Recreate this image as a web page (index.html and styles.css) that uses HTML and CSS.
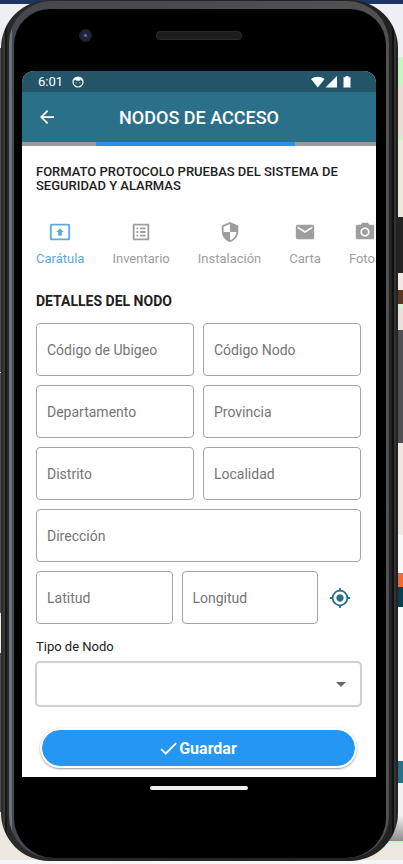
FILE: index.html
```html
<!DOCTYPE html>
<html lang="es">
<head>
<meta charset="utf-8">
<meta name="viewport" content="width=device-width, initial-scale=1">
<title>Nodos de acceso</title>
<link rel="stylesheet" href="styles.css">
</head>
<body>
<div class="phone">
  <div class="rim">
    <div class="body">
      <div class="sensors"><span class="camera"></span><span class="speaker"></span></div>
      <div class="screen">
        <div class="status">
          <span>6:01</span>
          <svg class="face" viewBox="0 0 12 12" width="12" height="12"><circle cx="6" cy="6" r="5" fill="none" stroke="#fff" stroke-width="1.200"/><path d="M1.500 5C2 2.500 4 1.300 6 1.300S10 2.500 10.500 5L8.500 4 7.600 4.700H4.500L3.500 3.800Z" fill="#fff"/><circle cx="4.200" cy="6.700" r=".5" fill="#fff"/><circle cx="7.800" cy="6.700" r=".5" fill="#fff"/></svg>
          <svg class="signals" viewBox="0 0 41 12" width="41" height="12" fill="#fff"><path d="M0 3C4 0 9.500 0 13.500 3L6.800 11.500Z"/><path d="M26 0V11.500H14.500Z"/><path d="M34.500 0h3v1.200H39.500V11.500h-7V1.200h2Z"/></svg>
        </div>
        <header class="appbar">
          <button class="back" type="button" aria-label="Volver"><svg viewBox="4 4 16 16" width="14" height="14"><path fill="#fff" d="M20 11H7.830l5.590-5.590L12 4l-8 8 8 8 1.410-1.410L7.830 13H20z"/></svg></button>
          <h1>NODOS DE ACCESO</h1>
        </header>
        <div class="track"><div class="bar"></div></div>
        <main>
          <h2 class="format">FORMATO PROTOCOLO PRUEBAS DEL SISTEMA DE SEGURIDAD Y ALARMAS</h2>
          <nav class="tabs">
            <a class="tab active" href="#caratula"><svg viewBox="0 0 24 24" width="22" height="22"><path d="M21 3H3c-1.110 0-2 .890-2 2v14c0 1.110.890 2 2 2h18c1.110 0 2-.890 2-2V5c0-1.110-.890-2-2-2zm0 16.020H3V4.980h18v14.040zM10 12H8l4-4 4 4h-2v4h-4v-4z"/></svg>Carátula</a>
            <a class="tab" href="#inventario"><svg viewBox="0 0 24 24" width="22" height="22"><path d="M19 5v14H5V5h14m1.100-2H3.900c-.500 0-.900.400-.900.900v16.200c0 .400.400.900.900.900h16.200c.400 0 .900-.500.900-.900V3.900c0-.500-.500-.900-.900-.900zM11 7h6v2h-6V7zm0 4h6v2h-6v-2zm0 4h6v2h-6zM7 7h2v2H7zm0 4h2v2H7zm0 4h2v2H7z"/></svg>Inventario</a>
            <a class="tab" href="#instalacion"><svg viewBox="0 0 24 24" width="22" height="22"><path d="M12 1L3 5v6c0 5.550 3.840 10.740 9 12 5.160-1.260 9-6.450 9-12V5l-9-4zm0 10.990h7c-.530 4.120-3.280 7.790-7 8.940V12H5V6.300l7-3.110v8.800z"/></svg>Instalación</a>
            <a class="tab" href="#carta"><svg viewBox="0 0 24 24" width="22" height="22"><path d="M20 4H4c-1.100 0-1.990.900-1.990 2L2 18c0 1.100.900 2 2 2h16c1.100 0 2-.900 2-2V6c0-1.100-.900-2-2-2zm0 4l-8 5-8-5V6l8 5 8-5v2z"/></svg>Carta</a>
            <a class="tab" href="#fotos"><svg viewBox="0 0 24 24" width="22" height="22"><circle cx="12" cy="12" r="3.200"/><path d="M9 2L7.170 4H4c-1.100 0-2 .900-2 2v12c0 1.100.900 2 2 2h16c1.100 0 2-.900 2-2V6c0-1.100-.900-2-2-2h-3.170L15 2H9zm3 15c-2.760 0-5-2.240-5-5s2.240-5 5-5 5 2.240 5 5-2.240 5-5 5z"/></svg>Fotos</a>
          </nav>
          <form>
            <h2 class="section">DETALLES DEL NODO</h2>
            <div class="fields">
              <input type="text" aria-label="Código de Ubigeo" placeholder="Código de Ubigeo">
              <input type="text" aria-label="Código Nodo" placeholder="Código Nodo">
              <input type="text" aria-label="Departamento" placeholder="Departamento">
              <input type="text" aria-label="Provincia" placeholder="Provincia">
              <input type="text" aria-label="Distrito" placeholder="Distrito">
              <input type="text" aria-label="Localidad" placeholder="Localidad">
              <input class="wide" type="text" aria-label="Dirección" placeholder="Dirección">
              <div class="coords wide">
                <input type="text" aria-label="Latitud" placeholder="Latitud">
                <input type="text" aria-label="Longitud" placeholder="Longitud">
                <button class="locate" type="button" aria-label="Ubicación actual"><svg viewBox="0 0 24 24" width="22" height="22"><path fill="#2b7089" d="M12 8c-2.210 0-4 1.790-4 4s1.790 4 4 4 4-1.790 4-4-1.790-4-4-4zm8.940 3A8.994 8.994 0 0 0 13 3.060V1h-2v2.060A8.994 8.994 0 0 0 3.060 11H1v2h2.060A8.994 8.994 0 0 0 11 20.940V23h2v-2.060A8.994 8.994 0 0 0 20.940 13H23v-2h-2.060zM12 19c-3.870 0-7-3.130-7-7s3.130-7 7-7 7 3.130 7 7-3.130 7-7 7z"/></svg></button>
              </div>
            </div>
            <label for="tipo">Tipo de Nodo</label>
            <div class="select">
              <select id="tipo"><option></option></select>
              <svg viewBox="0 0 10 5" width="10" height="5"><path fill="#666" d="M0 0h10L5 5z"/></svg>
            </div>
            <button class="save" type="submit"><svg viewBox="3 5 18 14" width="17" height="13"><path fill="#fff" d="M9 16.170L4.830 12l-1.420 1.410L9 19 21 7l-1.410-1.410z"/></svg>Guardar</button>
          </form>
        </main>
      </div>
      <div class="navbar"><span></span></div>
    </div>
  </div>
</div>
</body>
</html>
```
FILE: styles.css
```css
* { box-sizing: border-box; }

body {
  min-height: 100vh;
  margin: 0;
  padding: 0 5px 2px 1px;
  font-family: Roboto, sans-serif;
  color: #212121;
  background:
    linear-gradient(#1c3664 0 4px, transparent 4px),
    linear-gradient(#edeff4 0 57px, #c8f5c4 57px 85px, #e8e0d6 85px 137px, #c8f5c4 137px 140px, #ece8dc 140px 217px, #242424 217px 273px, #f2e9e5 273px 290px, #5a3826 290px 304px, #d5f3d4 304px 308px, #e8e2da 308px 330px, #505052 330px 443px, #eee8e0 443px 535px, #f8f8f8 535px 573px, #ef6a35 573px 587px, #093f4f 587px 607px, #fafafa 607px 761px, #2b7089 761px 783px, #f2f2f2 783px 815px, #8c8c8c 841px, #c8f5c4 841px 843px, #ede8df 843px 860px, #f5f5f5 860px) right / 50% 100% no-repeat,
    linear-gradient(#edeff4 0 48px, #4c4c50 48px 372px, #fff 372px 373px, #4c4c50 373px 613px, #f0ece0 613px 653px, #4c4c50 653px 812px, #ede8df 812px 860px, #f5f5f5 860px);
}

.phone {
  padding: 1px 9px 3px 8px;
  border-radius: 48px;
  background: linear-gradient(to right, #2c2c2c 0 2px, #3a3937 2px 4px, #171717 4px 6px, #292929 6px, #222 calc(100% - 6px), #111 calc(100% - 6px) calc(100% - 4px), #333 calc(100% - 4px) calc(100% - 2px), #222 calc(100% - 2px));
}

.rim {
  padding: 8px 3px 0 5px;
  border-radius: 42px;
  background: linear-gradient(to right, #6d717a 0 3px, #44474d 3px, #515154 100%);
}

.body {
  padding: 0 10px 0 8px;
  border-radius: 36px 36px 40px 40px;
  background: #000;
}

.sensors {
  display: grid;
  grid-template-columns: 1fr auto 1fr;
  align-items: center;
  height: 62px;
  padding-bottom: 10px;
}

.camera {
  width: 13px;
  height: 13px;
  margin-left: 57px;
  border-radius: 50%;
  background: radial-gradient(#5b6da0 0 1px, #1c2547 2px 4px, #202226 5px);
}

.speaker {
  width: 86px;
  height: 9px;
  border: 1px solid #292929;
  border-radius: 4px;
  background: #1b1c1b;
}

.screen {
  overflow: hidden;
  border-radius: 12px 12px 0 0;
  background: #fff;
}

.status {
  display: flex;
  align-items: center;
  gap: 9px;
  height: 21px;
  padding: 0 24px 0 16px;
  color: #fff;
  background: #235468;
  font-size: 13px;
}

.signals { margin-left: auto; }

.appbar {
  display: grid;
  grid-template-columns: 1fr auto 1fr;
  align-items: center;
  height: 50px;
  padding: 0 18px;
  color: #fff;
  background: #2b7089;
}

h1 {
  margin: 0;
  font-size: 18px;
  font-weight: 500;
}

button {
  padding: 0;
  border: 0;
  background: none;
  font-family: inherit;
  cursor: pointer;
}

button svg { display: block; }

.back { justify-self: start; }

.track {
  height: 4px;
  background: #9b9b9b;
}

.bar {
  width: 56%;
  height: 4px;
  margin-left: 21%;
  background: #2693ec;
}

main { padding: 19px 15px 9px 14px; }

h2 { margin: 0; }

.format {
  font-size: 13px;
  font-weight: 500;
  line-height: 14px;
}

.tabs {
  display: flex;
  gap: 28px;
  margin: 28px -15px 0 0;
  overflow: hidden;
}

.tab {
  display: flex;
  flex: none;
  flex-direction: column;
  align-items: center;
  gap: 8px;
  color: #9e9e9e;
  font-size: 13px;
  line-height: 16px;
  text-decoration: none;
}

.tab svg { fill: currentColor; }

.active { color: #5baae0; }

.section {
  margin: 25px 0 13px;
  font-size: 14px;
  font-weight: 700;
  line-height: 18px;
}

.fields {
  display: grid;
  grid-template-columns: 1fr 1fr;
  gap: 9px;
}

.wide { grid-column: 1 / -1; }

input {
  width: 100%;
  min-width: 0;
  height: 53px;
  padding: 0 10px;
  border: 1px solid #a4a4a4;
  border-radius: 4px;
  background: #fff;
  color: inherit;
  font: 14px Roboto, sans-serif;
}

input::placeholder { color: #757575; }

.coords {
  display: grid;
  grid-template-columns: 1fr 1fr 34px;
  gap: 9px;
}

.locate {
  display: flex;
  align-items: center;
  justify-content: center;
  padding-right: 8px;
}

label {
  display: block;
  margin: 15px 0 6px;
  font-size: 13px;
  line-height: 16px;
}

.select {
  display: grid;
  align-items: center;
  margin: 0 -1px;
}

.select > * { grid-area: 1 / 1; }

.select svg {
  justify-self: end;
  margin-right: 16px;
  pointer-events: none;
}

select {
  width: 100%;
  height: 46px;
  border: 2px solid #d0d0d0;
  border-radius: 5px;
  background: #fff;
  appearance: none;
}

.save {
  display: flex;
  align-items: center;
  justify-content: center;
  gap: 2px;
  width: calc(100% - 8px);
  height: 40px;
  margin: 21px 4px 0;
  border: 2px solid #fff;
  border-radius: 20px;
  box-shadow: 0 1px 2px #999;
  background: #2496f3;
  background-clip: padding-box;
  color: #fff;
  font-size: 16px;
  font-weight: 700;
}

.navbar {
  display: flex;
  justify-content: center;
  height: 81px;
  padding-top: 9px;
}

.navbar span {
  width: 98px;
  height: 4px;
  border-radius: 2px;
  background: #eee;
}
```
